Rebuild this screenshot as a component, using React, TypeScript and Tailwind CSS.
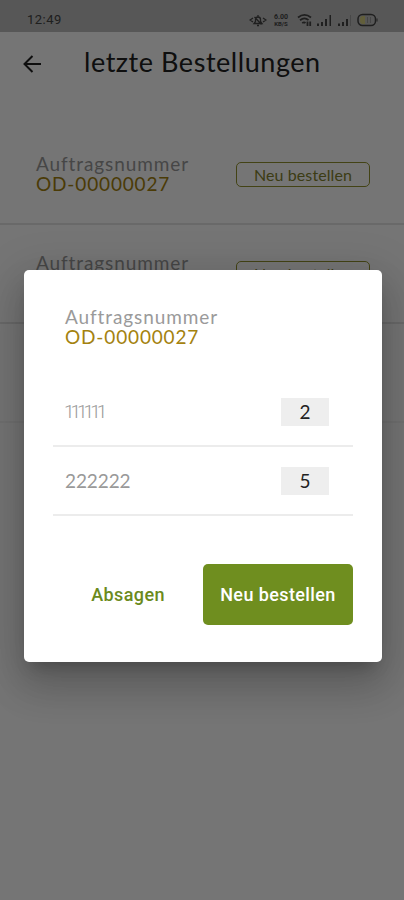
import React from 'react';

interface Order {
  number: string;
  divider: string;
}

interface OrderItem {
  name: string;
  amount: number;
  style: string;
}

const orders: Order[] = [
  { number: 'OD-00000027', divider: 'border-[#e4e4e4]' },
  { number: 'OD-00000026', divider: 'border-[#e4e4e4]' },
  { number: 'OD-00000025', divider: 'border-[#f4f4f4]' },
];

const items: OrderItem[] = [
  { name: '111111', amount: 2, style: "-ml-px font-['Roboto',sans-serif] font-light tracking-[-4px]" },
  { name: '222222', amount: 5, style: 'tracking-[-0.1px]' },
];

function StatusBar() {
  return (
    <div className="flex h-8 items-center bg-[#bdbdbd] pt-2 pl-[27px] font-['Roboto',sans-serif] text-[13px] text-[#444]">
      <span className="w-[222px] tracking-[0.5px]">12:49</span>
      <svg width="18" height="14" viewBox="0 0 18 14" fill="none" stroke="currentColor" strokeWidth="1.3">
        <path d="M4 5 1 7l3 2M14 5l3 2-3 2M5 10.500h8l-1.500-2V6.500a2.500 2.500 0 0 0-5 0v2zM8 12.500h2M9 2v2M5.500 4l7 7.500" />
      </svg>
      <div className="ml-[5px] w-[18px] text-center text-[7px] font-bold">
        <div className="h-[7px] leading-[7px]">6.00</div>
        <div className="h-[6px] text-[6px] leading-[6px]">KB/S</div>
      </div>
      <svg className="ml-[7px]" width="15" height="14" viewBox="0 0 15 14" fill="none" stroke="currentColor" strokeWidth="1.8">
        <path d="M1 4.500c4-3.300 9-3.300 13 0M3 7.200c3-2.300 6-2.300 8.500 0M5.200 10c1.500-1 2.300-1 3.300 0M10.500 8.500v4.500M13.200 8.500v4.500" />
      </svg>
      <svg className="ml-[5px]" width="34" height="14" viewBox="0 0 34 14" fill="currentColor">
        <path d="M0 10.500h2v2.500H0zM4 9h2v4H4zM8 6h2v7H8zM12.500 2h1.500v11h-1.500zM21 10.500h2v2.500h-2zM25 9h2v4h-2zM29 6h2v7h-2z" />
        <path d="M33 2h1v11h-1z" opacity=".25" />
      </svg>
      <svg className="ml-[6px]" width="21" height="14" viewBox="0 0 21 14" fill="none">
        <rect x="1" y="1.500" width="17.500" height="11" rx="4.500" stroke="currentColor" strokeWidth="1.500" />
        <path d="M8 3H6a3 3 0 0 0-3 3v2a3 3 0 0 0 3 3h2z" fill="#d6d080" />
        <path d="M10.500 4v6M13.500 4v6" stroke="#999" strokeWidth="1" />
        <path d="M20 5.500v3" stroke="currentColor" />
      </svg>
    </div>
  );
}

function OrderNumber({ number }: { number: string }) {
  return (
    <div className="text-[19px] whitespace-nowrap">
      <div className="h-5 leading-5 tracking-[0.9px] text-[#9a9a9a]">Auftragsnummer</div>
      <div className="h-5 leading-5 tracking-[0.85px] text-[#a4820f]">{number}</div>
    </div>
  );
}

export default function App() {
  return (
    <div className="relative h-[900px] w-[404px] overflow-hidden bg-white font-['Lato',sans-serif]">
      <StatusBar />
      <header className="flex h-[94px] items-start pt-[14px] pl-[23px]">
        <svg className="mt-[9px]" width="19" height="18" viewBox="0 0 19 18" fill="none" stroke="#222" strokeWidth="2">
          <path d="M18 9H2M9.500 1 1.500 9l8 8" />
        </svg>
        <h1 className="ml-[42px] text-[27px] leading-8 tracking-[0.55px] whitespace-nowrap text-[#222]">
          letzte Bestellungen
        </h1>
      </header>
      {orders.map((order) => (
        <div
          key={order.number}
          className={`flex h-[99px] items-start justify-between border-b-2 pt-7 pr-[34px] pl-9 ${order.divider}`}
        >
          <OrderNumber number={order.number} />
          <div className="mt-2 flex h-[25px] w-[134px] items-center justify-center rounded-[5px] border border-[#93932e] text-[16px] tracking-[0.1px] text-[#84842e]">
            Neu bestellen
          </div>
        </div>
      ))}

      <div className="absolute inset-0 flex items-start bg-black/54 pt-[270px] pl-[24px]">
        <div className="h-[392px] w-[358px] rounded-[5px] bg-white pt-[37px] pr-[29px] pl-[29px] shadow-[0_11px_15px_-7px_rgba(0,0,0,0.2),0_24px_38px_3px_rgba(0,0,0,0.14),0_9px_46px_8px_rgba(0,0,0,0.12)]">
          <div className="h-[71px] pl-3">
            <OrderNumber number="OD-00000027" />
          </div>
          {items.map((item) => (
            <div key={item.name} className="flex h-[69px] items-center justify-between border-b-2 border-[#ececec] pt-px pr-6 pl-3">
              <span className={`text-[19px] text-[#999] ${item.style}`}>{item.name}</span>
              <span className="flex h-7 w-12 items-center justify-center bg-[#eeeeee] text-[19px] text-[#222]">
                {item.amount}
              </span>
            </div>
          ))}
          <div className="mt-12 flex h-[61px] items-center font-['Roboto',sans-serif] text-[18px] font-medium whitespace-nowrap">
            <button className="w-[150px] tracking-[0.4px] text-[#6b8a1c]">Absagen</button>
            <button className="h-[61px] w-[150px] rounded-[5px] bg-[#6f8e1f] tracking-[0.4px] text-white">
              Neu bestellen
            </button>
          </div>
        </div>
      </div>
    </div>
  );
}
